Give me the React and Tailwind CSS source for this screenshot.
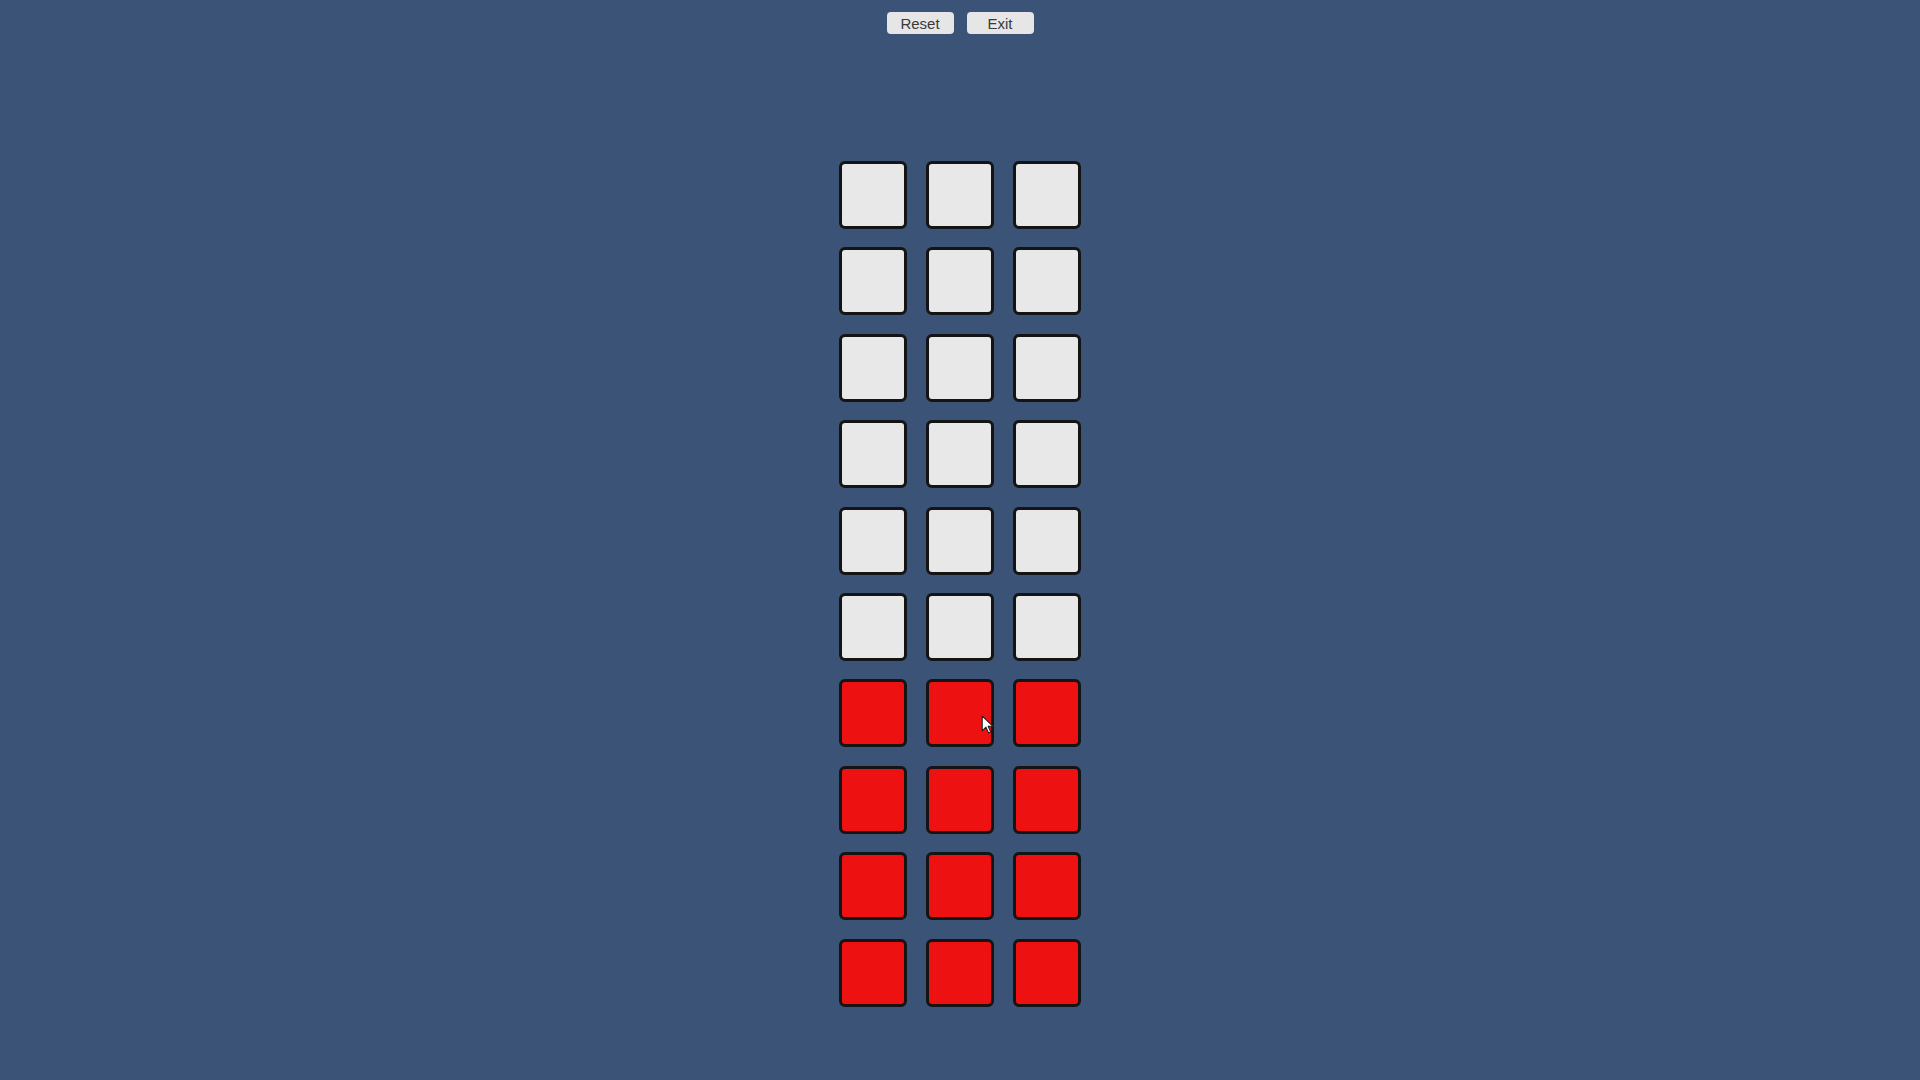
import { useState } from 'react';

const ROWS = 10;
const COLS = 3;
const FILLED_FROM = 6;

const Tile = ({ on, children }) => (
  <div
    className={`relative w-[68px] h-[68px] rounded-[6px] border-[3px] border-[#141414] ${
      on ? 'bg-[#ee1111]' : 'bg-[#e8e8e8]'
    }`}
  >
    {children}
  </div>
);

const Cursor = () => (
  <svg className="absolute left-[52px] top-[33px] w-[13px] h-[19px]" viewBox="0 0 12 18">
    <path d="M1 1 L1 15 L4.5 11.5 L7 17 L9 16 L6.6 10.6 L11 10.6 Z" fill="#fff" stroke="#222" strokeWidth="1" strokeLinejoin="round" />
  </svg>
);

export default function App() {
  const [grid] = useState(() =>
    Array.from({ length: ROWS }, (_, r) => Array.from({ length: COLS }, () => r >= FILLED_FROM))
  );

  return (
    <div className="w-[1920px] h-[1080px] bg-[#3b5377] flex flex-col items-center font-['Liberation_Sans',Arial,sans-serif]">
      <div className="flex gap-[13px] mt-[12px]">
        <button className="w-[67px] h-[22px] rounded-[4px] bg-[#e6e6e6] text-[15px] leading-none text-[#3a3a3a]">Reset</button>
        <button className="w-[67px] h-[22px] rounded-[4px] bg-[#e6e6e6] text-[15px] leading-none text-[#3a3a3a]">Exit</button>
      </div>

      <div className="grid grid-cols-3 gap-x-[19px] gap-y-[18.4px] mt-[127px]">
        {grid.map((row, r) =>
          row.map((on, c) => (
            <Tile key={`${r}-${c}`} on={on}>
              {r === 6 && c === 1 && <Cursor />}
            </Tile>
          ))
        )}
      </div>
    </div>
  );
}
